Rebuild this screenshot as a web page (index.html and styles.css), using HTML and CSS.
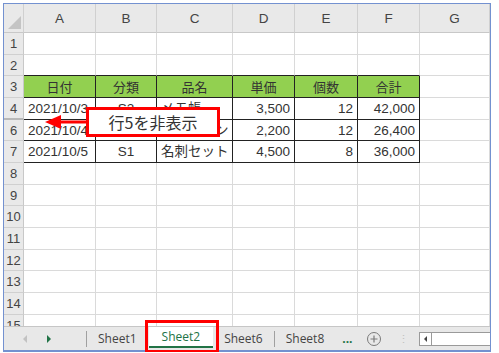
FILE: index.html
```html
<!DOCTYPE html>
<html lang="ja">
<head>
  <meta charset="UTF-8" />
  <title>行5を非表示</title>
  <link rel="stylesheet" href="styles.css">
</head>
<body>
  <div class="window">
    <div class="sheet">
      <div class="row head">
        <div class="corner"><span class="tri"></span></div>
        <div class="col">A</div><div class="col">B</div><div class="col">C</div><div class="col">D</div>
        <div class="col">E</div><div class="col">F</div><div class="col">G</div>
      </div>
      <div class="row"><div class="num">1</div><div></div><div></div><div></div><div></div><div></div><div></div><div></div></div>
      <div class="row"><div class="num">2</div><div class="top"></div><div class="top"></div><div class="top"></div><div class="top"></div><div class="top"></div><div class="top"></div><div></div></div>
      <div class="row">
        <div class="num">3</div>
        <div class="th">日付</div><div class="th">分類</div><div class="th">品名</div>
        <div class="th">単価</div><div class="th">個数</div><div class="th">合計</div><div></div>
      </div>
      <div class="row">
        <div class="num hidden-after">4</div>
        <div class="td">2021/10/3</div><div class="td c">S2</div><div class="td">メモ帳</div>
        <div class="td r">3,500</div><div class="td r">12</div><div class="td r">42,000</div><div></div>
      </div>
      <div class="row">
        <div class="num">6</div>
        <div class="td">2021/10/4</div><div class="td c">S3</div><div class="td">ボールペン</div>
        <div class="td r">2,200</div><div class="td r">12</div><div class="td r">26,400</div><div></div>
      </div>
      <div class="row">
        <div class="num">7</div>
        <div class="td">2021/10/5</div><div class="td c">S1</div><div class="td">名刺セット</div>
        <div class="td r">4,500</div><div class="td r">8</div><div class="td r">36,000</div><div></div>
      </div>
      <div class="row"><div class="num">8</div><div></div><div></div><div></div><div></div><div></div><div></div><div></div></div>
      <div class="row"><div class="num">9</div><div></div><div></div><div></div><div></div><div></div><div></div><div></div></div>
      <div class="row"><div class="num">10</div><div></div><div></div><div></div><div></div><div></div><div></div><div></div></div>
      <div class="row"><div class="num">11</div><div></div><div></div><div></div><div></div><div></div><div></div><div></div></div>
      <div class="row"><div class="num">12</div><div></div><div></div><div></div><div></div><div></div><div></div><div></div></div>
      <div class="row"><div class="num">13</div><div></div><div></div><div></div><div></div><div></div><div></div><div></div></div>
      <div class="row"><div class="num">14</div><div></div><div></div><div></div><div></div><div></div><div></div><div></div></div>
      <div class="row"><div class="num">15</div><div></div><div></div><div></div><div></div><div></div><div></div><div></div></div>
    </div>

    <div class="tabbar">
      <div class="nav">
        <span class="arrow-left"></span>
        <span class="arrow-right"></span>
      </div>
      <span class="sep"></span>
      <div class="tab">Sheet1</div>
      <div class="tab active">Sheet2</div>
      <div class="tab">Sheet6</div>
      <span class="sep"></span>
      <div class="tab">Sheet8</div>
      <div class="more">...</div>
      <svg class="add" width="16" height="16" viewBox="0 0 16 16">
        <circle cx="8" cy="8" r="6.5" fill="none" stroke="#7a7a7a" stroke-width="1"/>
        <path d="M8 4.5v7M4.5 8h7" stroke="#7a7a7a" stroke-width="1.2"/>
      </svg>
      <span class="dots">⋮</span>
      <div class="scroll">
        <span class="scroll-btn"><span class="mini-left"></span></span>
      </div>
    </div>

    <!-- callout over the hidden row -->
    <svg class="pointer" width="46" height="16" viewBox="0 0 46 16">
      <polygon points="0,8 16,1 16,15" fill="#ff0000"/>
      <rect x="14" y="6.5" width="32" height="3" fill="#ff0000"/>
    </svg>
    <div class="callout">行5を非表示</div>
    <div class="tab-mark"></div>
  </div>
</body>
</html>
```

FILE: styles.css
```css
body {
  margin: 0;
  background: #ffffff;
  font-family: "Liberation Sans", "Noto Sans CJK JP", sans-serif;
}

.window {
  position: relative;
  margin: 3px 0 0 3px;
  width: 486px;
  height: 346px;
  border: 1px solid #7391d0;
  border-bottom-width: 2px;
  background: #ffffff;
  display: flex;
  flex-direction: column;
}

.sheet {
  height: 322px;
  overflow: hidden;
}

.row {
  display: grid;
  grid-template-columns: 20px 72px 61px 76px 62px 63px 62px 70px;
  height: 21.67px;
}

.row > div {
  box-sizing: border-box;
  border-right: 1px solid #dadada;
  border-bottom: 1px solid #dadada;
  font-size: 13px;
  color: #333;
  line-height: 21px;
  white-space: nowrap;
  overflow: hidden;
}

.row.head {
  height: 29px;
  background: #e9e9e9;
}

.row.head > div {
  border-right: 1px solid #d0d0d0;
  border-bottom: 1px solid #c8c8c8;
  line-height: 29px;
  text-align: center;
  color: #444;
  font-size: 13.5px;
}

.corner {
  position: relative;
}

.tri {
  position: absolute;
  right: 2px;
  bottom: 3px;
  width: 0;
  height: 0;
  border-left: 13px solid transparent;
  border-bottom: 13px solid #c4c4c4;
}

.row > .num {
  background: #e9e9e9;
  border-right: 1px solid #c8c8c8;
  border-bottom: 1px solid #d0d0d0;
  text-align: center;
  color: #444;
  font-size: 13px;
}

.row > .num.hidden-after {
  border-bottom: 2px solid #b8b8b8;
}

.row > .top {
  border-bottom: 1px solid #222;
}

.row > .th {
  background: #92d050;
  border-right: 1px solid #222;
  border-bottom: 1px solid #222;
  text-align: center;
  font-family: "Noto Sans CJK JP", sans-serif;
  color: #333;
}

.row > .td {
  border-right: 1px solid #222;
  border-bottom: 1px solid #222;
  padding: 0 4px;
  font-size: 13.5px;
}

.row > .td.c {
  text-align: center;
}

.row > .td.r {
  text-align: right;
}

.tabbar {
  flex: 1;
  display: flex;
  align-items: center;
  background: #e8e8e8;
  border-top: 1px solid #c6c6c6;
  font-family: "Open Sans", sans-serif;
  font-size: 12px;
  color: #444;
}

.nav {
  width: 82px;
  display: flex;
  align-items: center;
  gap: 20px;
  padding-left: 19px;
  box-sizing: border-box;
}

.arrow-left {
  width: 0;
  height: 0;
  border-top: 4px solid transparent;
  border-bottom: 4px solid transparent;
  border-right: 4px solid #c2c2c2;
}

.arrow-right {
  width: 0;
  height: 0;
  border-top: 4px solid transparent;
  border-bottom: 4px solid transparent;
  border-left: 4px solid #217346;
}

.sep {
  width: 1px;
  height: 16px;
  background: #a0a0a0;
}

.tab {
  padding: 0 11px;
  line-height: 22px;
  height: 22px;
}

.tab.active {
  background: #ffffff;
  color: #217346;
  margin-left: 1px;
  padding: 0 13px;
  border-bottom: 2px solid #217346;
  box-sizing: border-box;
  align-self: flex-start;
  height: 21px;
  line-height: 20px;
}

.more {
  color: #217346;
  font-weight: bold;
  margin-left: 7px;
}

.add {
  margin-left: 13px;
}

.dots {
  margin-left: 16px;
  color: #c0c0c0;
  font-size: 11px;
}

.scroll {
  margin-left: 10px;
  flex: 1;
  height: 12px;
  border: 1px solid #9a9a9a;
  border-right: none;
  background: #ffffff;
}

.scroll-btn {
  display: flex;
  align-items: center;
  justify-content: center;
  width: 11px;
  height: 12px;
  border-right: 1px solid #9a9a9a;
}

.mini-left {
  width: 0;
  height: 0;
  border-top: 3px solid transparent;
  border-bottom: 3px solid transparent;
  border-right: 3px solid #444;
}

.pointer {
  position: absolute;
  left: 41px;
  top: 110px;
}

.callout {
  position: absolute;
  left: 82px;
  top: 103px;
  width: 134px;
  height: 30px;
  box-sizing: border-box;
  border: 3px solid #ff0000;
  background: #ffffff;
  text-align: center;
  line-height: 24px;
  font-family: "Noto Sans CJK JP", sans-serif;
  font-size: 16px;
  color: #333;
}

.tab-mark {
  position: absolute;
  left: 141px;
  top: 316px;
  width: 74px;
  height: 33px;
  box-sizing: border-box;
  border: 3px solid #ff0000;
}
```
